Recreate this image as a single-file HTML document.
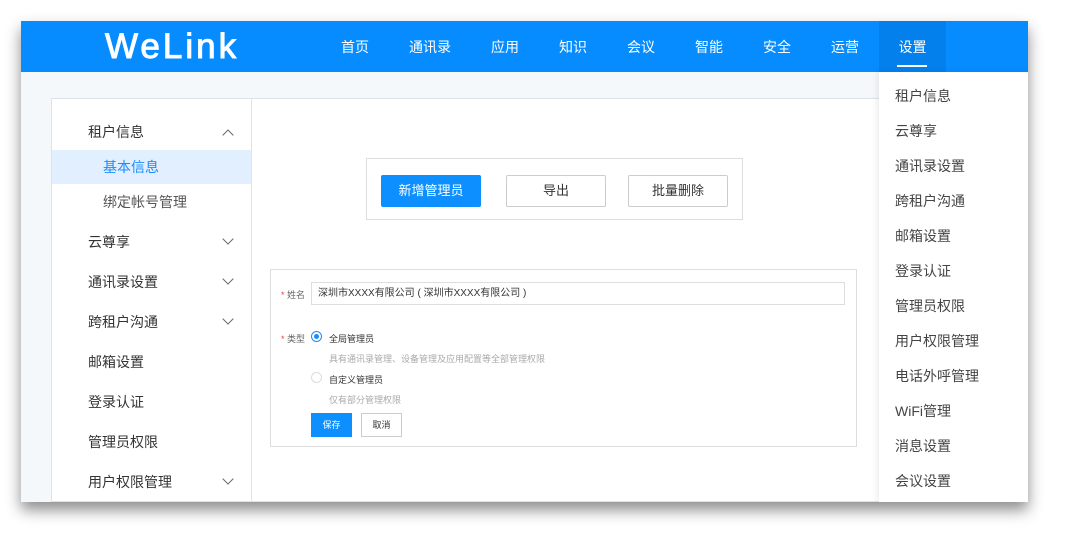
<!DOCTYPE html>
<html><head><meta charset="utf-8"><style>
*{margin:0;padding:0;box-sizing:border-box}
body{width:1071px;height:545px;background:#fff;font-family:"Liberation Sans","Noto Sans CJK SC",sans-serif;position:relative;overflow:hidden}
.shot{position:absolute;left:21px;top:21px;width:1007px;height:481px;background:#f5f8fa;box-shadow:0 8px 14px rgba(0,0,0,.45);overflow:hidden}
.hd{position:absolute;left:0;top:0;width:1007px;height:51px;background:#068cff}
.logo{position:absolute;left:84px;top:6px;font-size:35px;color:#fff;letter-spacing:3px;font-family:"Liberation Sans",sans-serif;-webkit-text-stroke:1px #fff}
.nav{position:absolute;top:2px;height:49px;line-height:49px;color:#fff;font-size:14px}
.set{top:0;height:51px;line-height:53px;background:#0480ec;width:67px;text-align:center}
.set:after{content:"";position:absolute;left:18px;top:44px;width:30px;height:2px;background:#fff}
.panel{position:absolute;left:30px;top:77px;width:977px;height:404px;background:#fff;border:1px solid #dde3ea}
.side{position:absolute;left:0;top:0;width:200px;height:404px;border-right:1px solid #dde3ea}
.it{position:absolute;left:36px;font-size:14px;color:#333;margin-top:-1px}
.sub{position:absolute;left:51px;font-size:14px;color:#555;margin-top:-1px}
.arr{position:absolute;left:172px;width:8px;height:8px;border-right:1.3px solid #666;border-bottom:1.3px solid #666;transform:rotate(45deg)}
.up{transform:rotate(-135deg)}
.btnbox{position:absolute;left:345px;top:137px;width:377px;height:62px;border:1px solid #ddd;background:#fff}
.b{position:absolute;top:16px;width:100px;height:32px;border:1px solid #ccc;border-radius:2px;text-align:center;line-height:30px;font-size:13px;color:#333}
.form{position:absolute;left:249px;top:248px;width:587px;height:178px;border:1px solid #ddd;background:#fff;font-size:9px;color:#333}
.dd{position:absolute;left:858px;top:51px;width:149px;height:430px;background:#fff;box-shadow:-2px 0 6px rgba(0,0,0,.08)}
.dd div{position:absolute;left:16px;font-size:14px;color:#444;margin-top:-1px}
</style></head><body>
<div class="shot">
<div class="hd">
<div class="logo">WeLink</div>
<div class="nav" style="left:320px">首页</div>
<div class="nav" style="left:388px">通讯录</div>
<div class="nav" style="left:470px">应用</div>
<div class="nav" style="left:538px">知识</div>
<div class="nav" style="left:606px">会议</div>
<div class="nav" style="left:674px">智能</div>
<div class="nav" style="left:742px">安全</div>
<div class="nav" style="left:810px">运营</div>
<div class="nav set" style="left:858px">设置</div>
</div>
<div class="panel">
<div class="side">
<div class="it" style="top:24px">租户信息</div><div class="arr up" style="top:32px"></div>
<div style="position:absolute;left:0;top:51px;width:199px;height:34px;background:#e1efff"></div>
<div class="sub" style="top:59px;color:#1a8cff">基本信息</div>
<div class="sub" style="top:94px">绑定帐号管理</div>
<div class="it" style="top:134px">云尊享</div><div class="arr" style="top:136px"></div>
<div class="it" style="top:174px">通讯录设置</div><div class="arr" style="top:176px"></div>
<div class="it" style="top:214px">跨租户沟通</div><div class="arr" style="top:216px"></div>
<div class="it" style="top:254px">邮箱设置</div>
<div class="it" style="top:294px">登录认证</div>
<div class="it" style="top:334px">管理员权限</div>
<div class="it" style="top:374px">用户权限管理</div><div class="arr" style="top:376px"></div>
</div>
</div>
<div class="btnbox">
<div class="b" style="left:14px;background:#0d8fff;border-color:#0d8fff;color:#fff">新增管理员</div>
<div class="b" style="left:139px">导出</div>
<div class="b" style="left:261px">批量删除</div>
</div>
<div class="form">
<div style="position:absolute;left:10px;top:18px;color:#666"><span style="color:#f33">*</span> 姓名</div>
<div style="position:absolute;left:40px;top:12px;width:534px;height:23px;border:1px solid #ddd;font-size:10px;line-height:21px;padding-left:6px">深圳市XXXX有限公司 ( 深圳市XXXX有限公司 )</div>
<div style="position:absolute;left:10px;top:62px;color:#666"><span style="color:#f33">*</span> 类型</div>
<div style="position:absolute;left:40px;top:61px;width:11px;height:11px;border:1px solid #1a8cff;border-radius:50%"><div style="position:absolute;left:2px;top:2px;width:5px;height:5px;border-radius:50%;background:#1a8cff"></div></div>
<div style="position:absolute;left:58px;top:62px">全局管理员</div>
<div style="position:absolute;left:58px;top:82px;color:#aaa">具有通讯录管理、设备管理及应用配置等全部管理权限</div>
<div style="position:absolute;left:40px;top:102px;width:11px;height:11px;border:1px solid #ddd;border-radius:50%"></div>
<div style="position:absolute;left:58px;top:103px">自定义管理员</div>
<div style="position:absolute;left:58px;top:123px;color:#aaa">仅有部分管理权限</div>
<div style="position:absolute;left:40px;top:143px;width:41px;height:24px;background:#0d8fff;color:#fff;text-align:center;line-height:24px">保存</div>
<div style="position:absolute;left:90px;top:143px;width:41px;height:24px;border:1px solid #ccc;text-align:center;line-height:22px">取消</div>
</div>
<div class="dd">
<div style="top:15px">租户信息</div>
<div style="top:50px">云尊享</div>
<div style="top:85px">通讯录设置</div>
<div style="top:120px">跨租户沟通</div>
<div style="top:155px">邮箱设置</div>
<div style="top:190px">登录认证</div>
<div style="top:225px">管理员权限</div>
<div style="top:260px">用户权限管理</div>
<div style="top:295px">电话外呼管理</div>
<div style="top:330px">WiFi管理</div>
<div style="top:365px">消息设置</div>
<div style="top:400px">会议设置</div>
</div>
</div>
</body></html>
